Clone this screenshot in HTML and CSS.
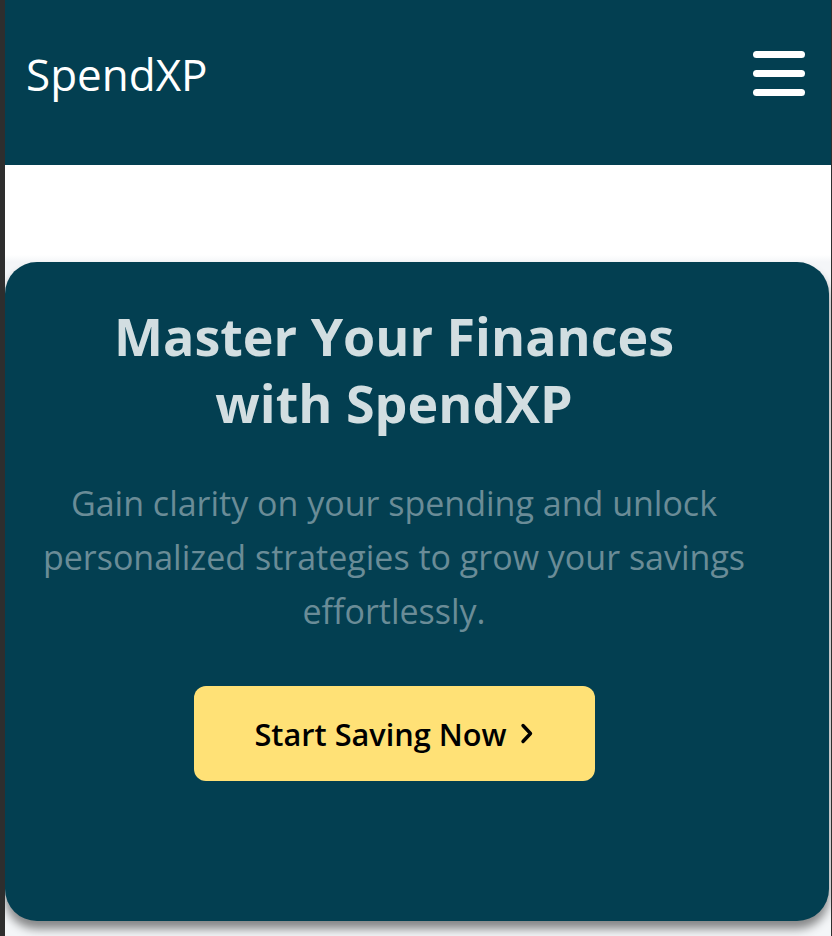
FILE: index.html
```html
<!DOCTYPE html>
<html lang="en">
<head>
<meta charset="utf-8">
<title>SpendXP</title>
<link rel="stylesheet" href="styles.css">
</head>
<body>
<div class="frame">
  <header class="topbar">
    <div class="logo">SpendXP</div>
    <button class="menu" aria-label="Menu">
      <span class="bar"></span>
      <span class="bar"></span>
      <span class="bar"></span>
    </button>
  </header>
  <main class="main">
    <section class="hero">
      <div class="hero-inner">
        <h1 class="hero-title">Master Your Finances with SpendXP</h1>
        <p class="hero-text">Gain clarity on your spending and unlock personalized strategies to grow your savings effortlessly.</p>
        <a class="cta" href="#">Start Saving Now
          <svg class="chev" viewBox="0 0 14 21" width="14" height="21" aria-hidden="true"><path d="M3 2.5 L10.5 10.5 L3 18.5" fill="none" stroke="#000" stroke-width="3.4" stroke-linecap="round" stroke-linejoin="round"/></svg>
        </a>
      </div>
    </section>
  </main>
</div>
</body>
</html>
```
FILE: styles.css
```css
* { box-sizing: border-box; }
html, body { margin: 0; padding: 0; }
body {
  background: #2e2e2e;
  font-family: "Open Sans", "Noto Sans", sans-serif;
}
.frame {
  margin-left: 5px;
  margin-right: 1px;
  min-height: 936px;
  background: #f4f6f8;
  overflow: hidden;
}
.topbar {
  height: 165px;
  background: #033f51;
  display: flex;
  align-items: center;
  justify-content: space-between;
  padding: 0 26px 18px 21px;
}
.logo {
  color: #ffffff;
  font-size: 44px;
  font-weight: 400;
}
.menu {
  background: none;
  border: 0;
  padding: 0;
  display: flex;
  flex-direction: column;
  gap: 12px;
  cursor: pointer;
}
.bar {
  display: block;
  width: 52px;
  height: 7px;
  border-radius: 4px;
  background: #ffffff;
}
.main {
  background: linear-gradient(#ffffff 0, #ffffff 90px, #f4f6f8 97px);
  padding-top: 97px;
  padding-right: 2px;
  padding-bottom: 15px;
}
.hero {
  background: #033f51;
  border-radius: 32px;
  height: 659px;
  box-shadow: 0 8px 10px rgba(0, 0, 0, 0.45);
  padding: 40px 70px 0 24px;
}
.hero-inner {
  display: flex;
  flex-direction: column;
  align-items: center;
  text-align: center;
}
.hero-title {
  margin: 0;
  max-width: 600px;
  color: #d2dee1;
  font-size: 52px;
  font-weight: 700;
  line-height: 67px;
}
.hero-text {
  margin: 40px 0 0;
  max-width: 730px;
  color: #6a8c97;
  font-size: 34px;
  font-weight: 400;
  line-height: 54px;
}
.cta {
  margin-top: 48px;
  width: 401px;
  height: 95px;
  border-radius: 12px;
  background: #ffe176;
  color: #000000;
  text-decoration: none;
  display: flex;
  align-items: center;
  justify-content: center;
  gap: 13px;
  font-size: 30.7px;
  font-weight: 600;
}
.chev { display: block; }
```
